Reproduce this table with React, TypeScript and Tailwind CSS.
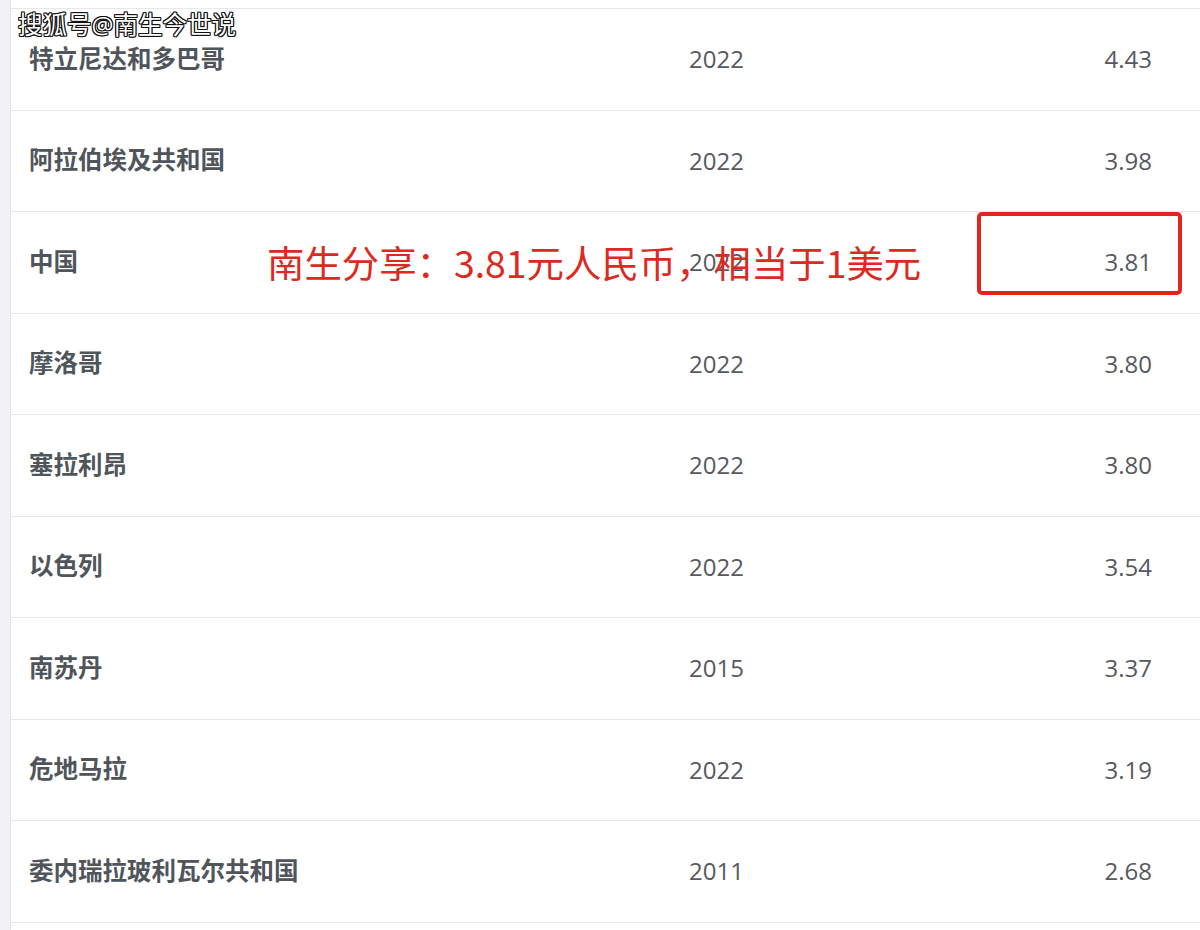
const ROWS: [string, string, string][] = [
  ['特立尼达和多巴哥', '2022', '4.43'],
  ['阿拉伯埃及共和国', '2022', '3.98'],
  ['中国', '2022', '3.81'],
  ['摩洛哥', '2022', '3.80'],
  ['塞拉利昂', '2022', '3.80'],
  ['以色列', '2022', '3.54'],
  ['南苏丹', '2015', '3.37'],
  ['危地马拉', '2022', '3.19'],
  ['委内瑞拉玻利瓦尔共和国', '2011', '2.68'],
]

export default function App() {
  return (
    <div className="relative w-[1200px] h-[930px] overflow-hidden bg-white flex" style={{ fontFamily: "'Open Sans', 'Noto Sans CJK SC', sans-serif" }}>
      <div className="w-[11px] shrink-0 bg-[#f1f2f4] border-r border-[#e4e6e9]" />

      <div className="flex-1 pt-[8px]">
        {ROWS.map(([name, year, value]) => (
          <div key={name} className="h-[101.5px] border-t border-[#e6e8eb] flex items-center pl-[18px] pr-[48px]">
            <span className="w-[660px] text-[24.5px] font-bold text-[#50555b]">{name}</span>
            <span className="flex-1 text-[24px] text-[#56595e]">{year}</span>
            <span className="text-[24px] text-[#56595e]">{value}</span>
          </div>
        ))}
        <div className="border-t border-[#e6e8eb]" />
      </div>

      {/* watermark */}
      <div className="absolute left-[18px] top-[8px] text-[24.5px] leading-[34px] text-white [text-shadow:1px_0_0_#111,-1px_0_0_#111,0_1px_0_#111,0_-1px_0_#111,1px_1px_0_#111,-1px_-1px_0_#111,1px_-1px_0_#111,-1px_1px_0_#111]">
        搜狐号@南生今世说
      </div>

      {/* annotation */}
      <div className="absolute left-[267px] top-[237px] text-[37.4px] leading-[50px] text-[#dc2a22] whitespace-nowrap" style={{ fontFamily: "'Noto Sans CJK SC', sans-serif" }}>
        南生分享：3.81元人民币，相当于1美元
      </div>
      <div className="absolute left-[977px] top-[212px] w-[205px] h-[83px] border-[4px] border-[#e3241d] rounded-[5px]" />
    </div>
  )
}
